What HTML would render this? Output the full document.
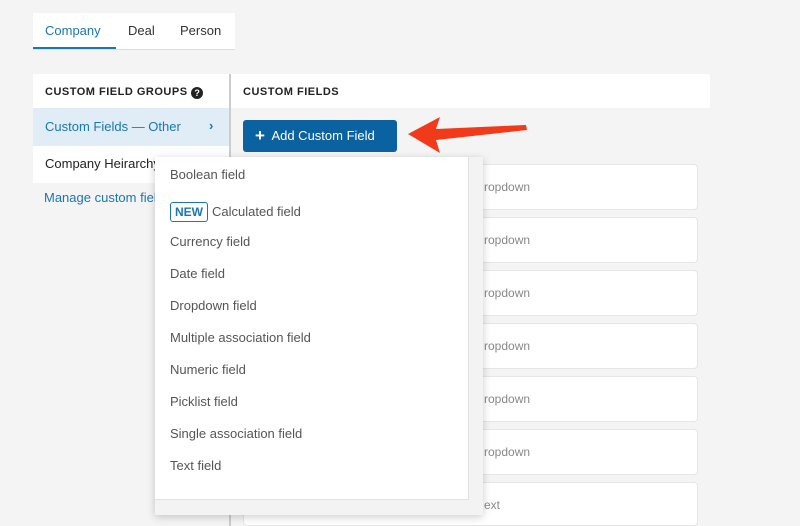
<!DOCTYPE html>
<html><head><style>
*{margin:0;padding:0;box-sizing:border-box}
html,body{width:800px;height:526px;overflow:hidden}
body{background:#f4f4f4;font-family:"Liberation Sans",sans-serif;position:relative;color:#333}
.a{position:absolute}
.tabs{left:33px;top:13px;width:202px;height:37px;background:#fff;border-bottom:1px solid #ddd}
.tabs span{position:absolute;top:10px;font-size:13px}
.hdr{font-size:11px;font-weight:bold;letter-spacing:.5px;color:#222}
.card{left:243px;width:455px;height:46px;background:#fff;border:1px solid #e6e6e6;border-radius:4px;font-size:12px;color:#888;padding:15px 0 0 240px}
.dd{left:155px;top:157px;width:328px;height:358px;background:#f3f3f3;box-shadow:0 2px 8px rgba(0,0,0,.2)}
.dd .in{position:absolute;left:0;top:0;width:314px;height:343px;background:#fff;border-right:1px solid #e2e2e2;border-bottom:1px solid #e2e2e2}
.dd .it{position:absolute;left:15px;font-size:13px;color:#555}
</style></head><body>
<div class="a tabs">
<span style="left:12px;color:#1a76b5">Company</span>
<span style="left:95px">Deal</span>
<span style="left:147px">Person</span>
<div class="a" style="left:0;top:34px;width:83px;height:2px;background:#1a76b5"></div>
</div>
<div class="a" style="left:33px;top:74px;width:196px;height:34px;background:#fff"></div>
<div class="a hdr" style="left:45px;top:86px">CUSTOM FIELD GROUPS <span style="display:inline-block;width:12px;height:12px;border-radius:50%;background:#222;color:#fff;font-size:9px;text-align:center;line-height:12px;vertical-align:-1px;letter-spacing:0">?</span></div>
<div class="a" style="left:33px;top:108px;width:196px;height:38px;background:#e0edf6"></div>
<div class="a" style="left:45px;top:119px;font-size:13px;color:#1a76b5">Custom Fields — Other</div>
<div class="a" style="left:209px;top:118px;font-size:13px;font-weight:bold;color:#1a76b5">›</div>
<div class="a" style="left:33px;top:146px;width:196px;height:37px;background:#fff"></div>
<div class="a" style="left:45px;top:156px;font-size:13px;color:#222">Company Heirarchy</div>
<div class="a" style="left:44px;top:190px;font-size:13px;color:#1a76b5">Manage custom fields</div>
<div class="a" style="left:229px;top:74px;width:2px;height:452px;background:#ccc"></div>
<div class="a" style="left:231px;top:74px;width:479px;height:34px;background:#fff"></div>
<div class="a hdr" style="left:243px;top:86px">CUSTOM FIELDS</div>
<div class="a" style="left:243px;top:120px;width:154px;height:32px;background:#0b62a0;border-radius:3px;color:#fff;font-size:13px;line-height:32px;padding-left:12px"><b style="font-size:17px;vertical-align:-1px">+</b>&nbsp; Add Custom Field</div>
<svg class="a" style="left:402px;top:113px" width="130" height="44"><path d="M6 21 L38 4 L34 16 L124 12 L125 17 L34 27 L38 40 Z" fill="#f03a1a"/></svg>
<div class="a card" style="top:164px">ropdown</div>
<div class="a card" style="top:217px">ropdown</div>
<div class="a card" style="top:270px">ropdown</div>
<div class="a card" style="top:323px">ropdown</div>
<div class="a card" style="top:376px">ropdown</div>
<div class="a card" style="top:429px">ropdown</div>
<div class="a card" style="top:482px;height:44px">ext</div>
<div class="a dd"><div class="in">
<div class="it" style="top:10px">Boolean field</div>
<div class="it" style="top:45px"><span style="display:inline-block;border:1px solid #1a76b5;border-radius:3px;color:#1a76b5;font-weight:bold;font-size:12px;padding:2px 4px;margin-right:4px">NEW</span>Calculated field</div>
<div class="it" style="top:77px">Currency field</div>
<div class="it" style="top:109px">Date field</div>
<div class="it" style="top:141px">Dropdown field</div>
<div class="it" style="top:173px">Multiple association field</div>
<div class="it" style="top:205px">Numeric field</div>
<div class="it" style="top:237px">Picklist field</div>
<div class="it" style="top:269px">Single association field</div>
<div class="it" style="top:301px">Text field</div>
</div></div>
</body></html>
